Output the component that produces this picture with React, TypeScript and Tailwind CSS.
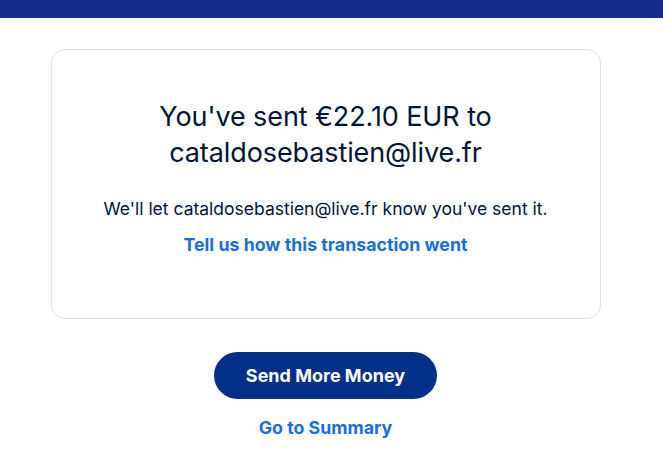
export default function App() {
  return (
    <div className="min-h-[475px] bg-white" style={{ fontFamily: 'Inter, "Noto Sans", sans-serif' }}>
      <div className="h-[18px] bg-[#142c8e]" />
      <div className="w-[651px] flex flex-col items-center pt-[31px]">
        <div className="w-[550px] h-[270px] rounded-[14px] border border-[#e3e3e3] flex flex-col items-center pt-[49px]">
          <h1 className="text-[27px] leading-[36px] text-[#001435] text-center font-normal tracking-[-0.1px]">
            You've sent €22.10 EUR to
            <br />
            cataldosebastien@live.fr
          </h1>
          <p className="mt-[27px] text-[17.5px] leading-[22px] text-[#001435]">
            We'll let cataldosebastien@live.fr know you've sent it.
          </p>
          <a className="mt-[14px] text-[17.8px] leading-[22px] font-bold text-[#1a6ed8]">
            Tell us how this transaction went
          </a>
        </div>
        <button className="mt-[33px] w-[223px] h-[47px] rounded-full bg-[#003087] text-white text-[18px] font-bold">
          Send More Money
        </button>
        <a className="mt-[17px] text-[17.8px] leading-[24px] font-bold text-[#1a6ed8]">Go to Summary</a>
      </div>
    </div>
  );
}
